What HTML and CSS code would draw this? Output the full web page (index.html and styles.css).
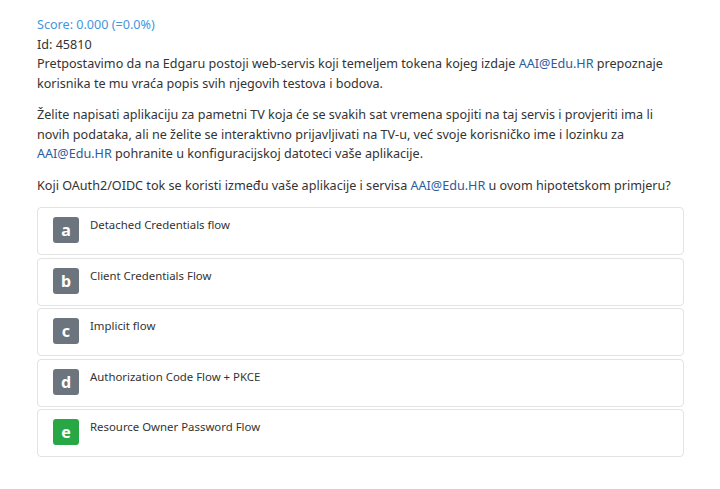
FILE: index.html
```html
<!DOCTYPE html>
<html>
<head>
<meta charset="utf-8">
<link rel="stylesheet" href="styles.css">
</head>
<body>
<div class="page">
  <div class="score">Score: 0.000 (=0.0%)</div>
  <div class="id">Id: 45810</div>
  <p>Pretpostavimo da na Edgaru postoji web-servis koji temeljem tokena kojeg izdaje <a>AAI@Edu.HR</a> prepoznaje<br>korisnika te mu vraća popis svih njegovih testova i bodova.</p>
  <p>Želite napisati aplikaciju za pametni TV koja će se svakih sat vremena spojiti na taj servis i provjeriti ima li<br>novih podataka, ali ne želite se interaktivno prijavljivati na TV-u, već svoje korisničko ime i lozinku za<br><a>AAI@Edu.HR</a> pohranite u konfiguracijskoj datoteci vaše aplikacije.</p>
  <p>Koji OAuth2/OIDC tok se koristi između vaše aplikacije i servisa <a>AAI@Edu.HR</a> u ovom hipotetskom primjeru?</p>
  <div class="options">
    <div class="option"><span class="badge">a</span><span class="label">Detached Credentials flow</span></div>
    <div class="option"><span class="badge">b</span><span class="label">Client Credentials Flow</span></div>
    <div class="option"><span class="badge">c</span><span class="label">Implicit flow</span></div>
    <div class="option"><span class="badge">d</span><span class="label">Authorization Code Flow + PKCE</span></div>
    <div class="option"><span class="badge correct">e</span><span class="label">Resource Owner Password Flow</span></div>
  </div>
</div>
</body>
</html>
```
FILE: styles.css
```css
html, body {
  margin: 0;
  padding: 0;
  background: #fff;
}
body {
  font-family: "Noto Sans", "Open Sans", sans-serif;
  font-size: 12.6px;
  line-height: 19.5px;
  color: #333;
}
.page {
  padding: 15px 36px 0 37px;
}
.score {
  color: #4496dc;
}
p {
  margin: 0 0 12px 0;
  white-space: nowrap;
}
a {
  color: #2b5c9e;
}
.options {
  display: flex;
  flex-direction: column;
  gap: 2.5px;
}
.option {
  display: flex;
  align-items: flex-start;
  gap: 11px;
  height: 48px;
  box-sizing: border-box;
  border: 1px solid #e3e3e3;
  border-radius: 4px;
  padding: 9px 15px;
}
.badge {
  width: 26px;
  height: 26px;
  border-radius: 3px;
  background: #6c757d;
  color: #fff;
  font-weight: bold;
  font-size: 16px;
  line-height: 26px;
  text-align: center;
  flex: none;
}
.badge.correct {
  background: #28a745;
}
.label {
  font-size: 11.4px;
  line-height: 16px;
  margin-top: 0;
}
```
